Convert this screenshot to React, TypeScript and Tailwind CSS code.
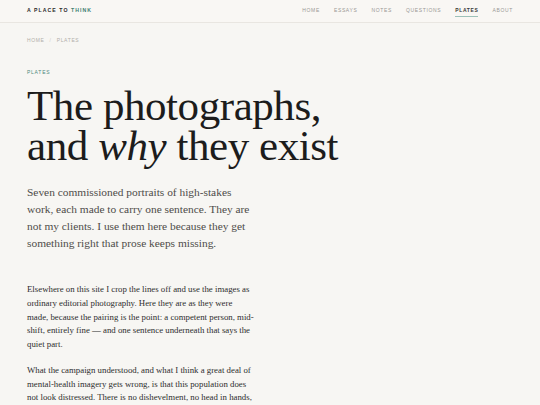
const nav = ["Home", "Essays", "Notes", "Questions", "Plates", "About"];

function Header() {
  return (
    <header className="flex items-center justify-between h-[23px] px-[27px] bg-[#f9f7f4] border-b border-[#e9e6e1]">
      <div className="text-[5.2px] font-bold tracking-[0.2em] text-[#2a2a2a] uppercase">
        A place to <span className="text-[#3f7f72]">think</span>
      </div>
      <nav className="flex items-center gap-[14px] h-full">
        {nav.map((item) => (
          <a
            key={item}
            href="#"
            className={
              item === "Plates"
                ? "relative flex items-center h-full text-[5px] tracking-[0.13em] uppercase text-[#3a3a3a] font-semibold"
                : "flex items-center h-full text-[5px] tracking-[0.13em] uppercase text-[#9a9894]"
            }
          >
            {item}
            {item === "Plates" && (
              <span className="absolute left-0 right-[1px] bottom-[5px] h-[1px] bg-[#9dc1b9]" />
            )}
          </a>
        ))}
      </nav>
    </header>
  );
}

export default function App() {
  return (
    <div
      className="min-h-screen bg-[#f7f6f3] text-[#222]"
      style={{ fontFamily: '"Liberation Serif", serif' }}
    >
      <div style={{ fontFamily: '"Liberation Sans", sans-serif' }}>
        <Header />
      </div>
      <main className="px-[27px]">
        <div
          className="pt-[14px] text-[5px] tracking-[0.13em] uppercase text-[#b2afaa] flex gap-[5px]"
          style={{ fontFamily: '"Liberation Sans", sans-serif' }}
        >
          <span>Home</span>
          <span className="text-[#d0cdc8]">/</span>
          <span>Plates</span>
        </div>

        <div
          className="mt-[24px] text-[5px] tracking-[0.15em] uppercase text-[#4f8a7e]"
          style={{ fontFamily: '"Liberation Sans", sans-serif' }}
        >
          Plates
        </div>

        <h1 className="mt-[10px] text-[43px] leading-[40px] text-[#1c1c1c] tracking-[-0.01em]">
          The photographs,
          <br />
          and <em>why</em> they exist
        </h1>

        <p className="mt-[18px] max-w-[230px] text-[11.4px] leading-[17px] text-[#4e4c49]">
          Seven commissioned portraits of high-stakes work, each made to carry
          one sentence. They are not my clients. I use them here because they
          get something right that prose keeps missing.
        </p>

        {/* line breaks pinned so the serif fallback wraps like the original */}
        <div className="mt-[31px] max-w-[242px] text-[8.8px] leading-[13.75px] text-[#2e2e2e]">
          <p>
            Elsewhere on this site I crop the lines off and use the images as
            <br />
            ordinary editorial photography. Here they are as they were
            <br />
            made, because the pairing is the point: a competent person, mid-
            <br />
            shift, entirely fine — and one sentence underneath that says the
            <br />
            quiet part.
          </p>
          <p className="mt-[12px]">
            What the campaign understood, and what I think a great deal of
            <br />
            mental-health imagery gets wrong, is that this population does
            <br />
            not look distressed. There is no dishevelment, no head in hands,
            <br />
            no grey filter over the frame.
          </p>
        </div>
      </main>
    </div>
  );
}
